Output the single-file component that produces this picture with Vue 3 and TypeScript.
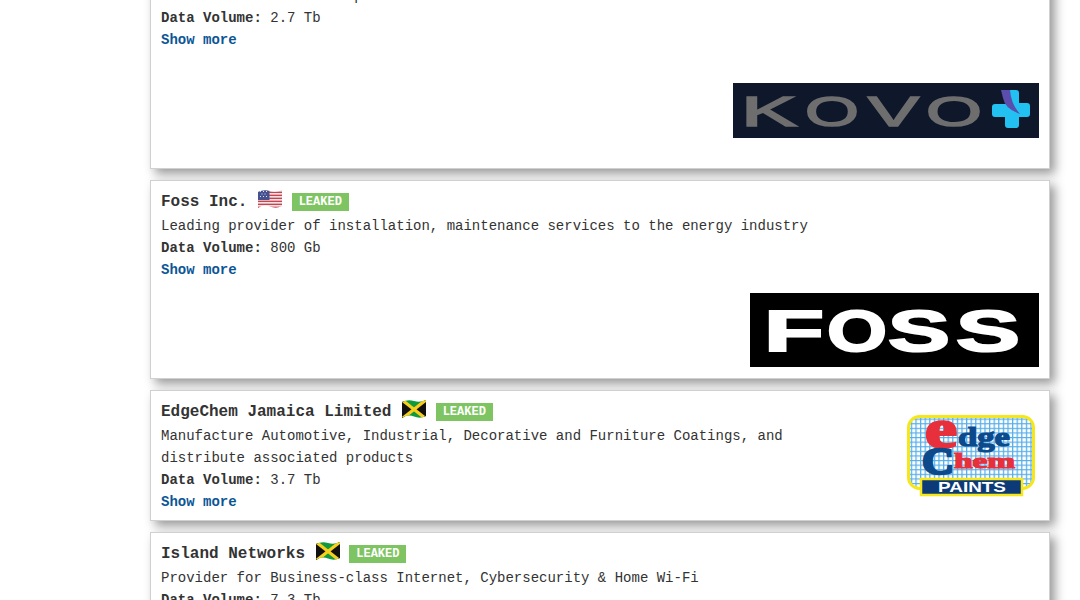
<script setup lang="ts">
interface Company {
  name: string
  flag: 'us' | 'jm'
  lines: string[]
  volume: string
  logo: '' | 'kovo' | 'foss' | 'edge'
}
const companies: Company[] = [
  { name: 'Kovo+', flag: 'us', lines: ['Healthcare and medical products'], volume: '2.7 Tb', logo: 'kovo' },
  { name: 'Foss Inc.', flag: 'us', lines: ['Leading provider of installation, maintenance services to the energy industry'], volume: '800 Gb', logo: 'foss' },
  { name: 'EdgeChem Jamaica Limited', flag: 'jm', lines: ['Manufacture Automotive, Industrial, Decorative and Furniture Coatings, and distribute associated products'], volume: '3.7 Tb', logo: 'edge' },
  { name: 'Island Networks', flag: 'jm', lines: ['Provider for Business-class Internet, Cybersecurity & Home Wi-Fi'], volume: '7.3 Tb', logo: '' },
]
const wave = 'M0 3Q6 0 12 2T24 1V17Q18 20 12 17.500T0 19Z'
const stripes = [0, 1, 2, 3, 4, 5, 6]
const kovoLetters = [
  { ch: 'K', x: 741, w: 56 },
  { ch: 'O', x: 805, w: 54 },
  { ch: 'V', x: 868, w: 51 },
  { ch: 'O', x: 926, w: 56 },
]
const fossLetters = [
  { ch: 'F', x: 764, w: 60 },
  { ch: 'O', x: 827, w: 60 },
  { ch: 'S', x: 888, w: 62 },
  { ch: 'S', x: 956, w: 64 },
]
</script>

<template>
  <div class="list">
    <article v-for="(c, i) in companies" :key="c.name" class="card">
      <div class="info">
        <div class="title">
          <span class="name">{{ c.name }}</span>
          {{ ' ' }}
          <svg class="flag" viewBox="0 -1 24 20" width="24" height="20" aria-hidden="true">
            <clipPath :id="`wave-${i}`"><path :d="wave" /></clipPath>
            <g v-if="c.flag === 'us'" :clip-path="`url(#wave-${i})`">
              <rect width="24" height="20" fill="#f4f4f4" />
              <rect v-for="s in stripes" :key="s" x="0" :y="s * 3 - 0.4" width="24" height="1.5" fill="#c8434f" />
              <rect width="11.500" height="11" fill="#46528f" />
              <path d="M2 2.500h1M5 2.500h1M8 2.500h1M3.500 5h1M6.500 5h1M2 7.500h1M5 7.500h1M8 7.500h1" stroke="#dfe3f2" stroke-width="1" />
            </g>
            <g v-else :clip-path="`url(#wave-${i})`">
              <rect width="24" height="20" fill="#109a3e" />
              <path d="M0 0L11 10L0 20ZM24 0L13 10L24 20Z" fill="#111" />
              <path d="M0 1L23 19M24 1L1 19" stroke="#f8cf1d" stroke-width="3.200" />
            </g>
          </svg>
          {{ ' ' }}
          <span class="badge">LEAKED</span>
        </div>
        <p v-for="l in c.lines" :key="l" class="line">{{ l }}</p>
        <p class="line"><b>Data Volume:</b> {{ c.volume }}</p>
        <a class="more" href="#">Show more</a>
      </div>

      <svg v-if="c.logo === 'kovo'" class="logo logo-kovo" viewBox="733 83 306 55" width="306" height="55" role="img" aria-label="Kovo+ logo">
        <rect x="733" y="83" width="306" height="55" fill="#0f182b" />
        <text v-for="l in kovoLetters" :key="l.x" :x="l.x" y="125.500" :textLength="l.w" lengthAdjust="spacingAndGlyphs" class="kovo-word">{{ l.ch }}</text>
        <path d="M1006 90h10q3 0 3 3v10h8q3 0 3 3v8q0 3-3 3h-8v8q0 3-3 3h-8q-3 0-3-3v-8h-10q-3 0-3-3v-7q0-3 3-3h11z" fill="#22c1f1" />
        <path d="M1001 90h9q1 14 10 24q-15-5-17-16z" fill="#5a4dab" />
      </svg>

      <svg v-else-if="c.logo === 'foss'" class="logo logo-foss" viewBox="750 293 289 74" width="289" height="74" role="img" aria-label="Foss logo">
        <rect x="750" y="293" width="289" height="74" fill="#000" />
        <text v-for="l in fossLetters" :key="l.x" :x="l.x" y="350.500" :textLength="l.w" lengthAdjust="spacingAndGlyphs" class="foss-word">{{ l.ch }}</text>
      </svg>

      <svg v-else-if="c.logo === 'edge'" class="logo logo-edge" viewBox="905 410 134 90" width="134" height="90" role="img" aria-label="EdgeChem Paints logo">
        <defs>
          <pattern id="grid" x="0" y="0" width="4.600" height="4.600" patternUnits="userSpaceOnUse">
            <rect width="4.600" height="4.600" fill="#fff" />
            <path d="M0 .6H4.600M.6 0V4.600" stroke="#55aeea" stroke-width="1.300" />
          </pattern>
        </defs>
        <rect x="908.500" y="416.500" width="125" height="72" rx="11" fill="url(#grid)" stroke="#f6e71a" stroke-width="3" />
        <text x="925" y="447" textLength="32" lengthAdjust="spacingAndGlyphs" class="edge-big red">e</text>
        <text x="958" y="446" textLength="52" lengthAdjust="spacingAndGlyphs" class="edge-mid navy">dge</text>
        <text x="922" y="474" textLength="32" lengthAdjust="spacingAndGlyphs" class="edge-cap navy">C</text>
        <text x="954" y="468" textLength="61" lengthAdjust="spacingAndGlyphs" class="edge-low red">hem</text>
        <rect x="921" y="479" width="101" height="16" fill="#0c3a78" stroke="#f6e71a" stroke-width="2.500" />
        <text x="938" y="492" textLength="68" lengthAdjust="spacingAndGlyphs" class="edge-paints">PAINTS</text>
      </svg>
    </article>
  </div>
</template>

<style>
html, body { overflow: hidden; background: #fff; }
</style>

<style scoped>
.list {
  display: flex;
  flex-direction: column;
  gap: 11px;
  width: 900px;
  margin: -50px 0 0 150px;
  font: 14px/22px "Liberation Mono", monospace;
  color: #333;
}
.card {
  display: flex;
  flex-wrap: wrap;
  box-sizing: border-box;
  width: 900px;
  padding: 8px 10px 7px;
  background: #fff;
  border: 1px solid #d0d0d0;
  box-shadow: 5px 5px 10px #999;
}
.info { width: 75%; }
.title { font-size: 16px; font-weight: 700; line-height: 22px; height: 22px; margin-top: -1px; padding-bottom: 5px; white-space: nowrap; }
.flag { vertical-align: -2px; margin-left: 1px; }
.badge {
  display: inline-block;
  padding: 0 7px;
  background: #7ec462;
  color: #fff;
  font-size: 12px;
  line-height: 18px;
  vertical-align: 1px;
}
.line { margin: 0; }
.more { display: block; color: #0b5596; font-weight: 700; text-decoration: none; }
.logo { display: block; margin-left: auto; }
.logo-kovo { margin-top: 32px; margin-bottom: 23px; }
.logo-foss { margin-top: 12px; margin-bottom: 4px; }
.logo-edge { margin-top: 11px; }
text { font-family: "Liberation Sans", sans-serif; }
.kovo-word { font-size: 42px; fill: #6e6e6e; stroke: #6e6e6e; stroke-width: 1.500px; }
.foss-word { font-size: 57px; font-weight: 700; fill: #fff; stroke: #fff; stroke-width: 2px; }
.edge-big, .edge-mid, .edge-cap, .edge-low { font-family: "Liberation Serif", serif; font-weight: 700; }
.edge-big { font-size: 55px; stroke-width: 2.500px; }
.edge-mid { font-size: 27px; stroke-width: 1.200px; }
.edge-cap { font-size: 38px; stroke-width: 2.500px; }
.edge-low { font-size: 20px; stroke-width: 1.200px; }
.red { fill: #e7303c; stroke: #e7303c; }
.navy { fill: #0c4a8c; stroke: #0c4a8c; }
.edge-paints { font-size: 14px; font-weight: 700; fill: #fff; }
</style>
